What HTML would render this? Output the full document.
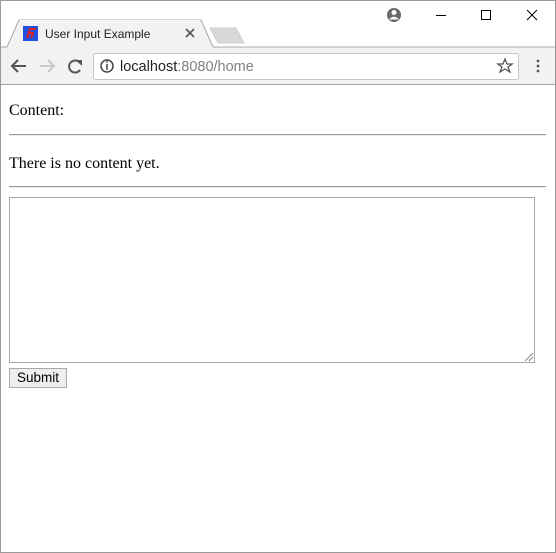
<!DOCTYPE html>
<html><head><style>
*{margin:0;padding:0;box-sizing:border-box}
body{width:556px;height:553px;overflow:hidden;background:#fff;position:relative;font-family:"Liberation Sans",sans-serif}
.abs{position:absolute}
.frame{left:0;top:0;width:556px;height:553px;border:1px solid #9a9a9a}
.serif{font-family:"Liberation Serif",serif;font-size:16px;color:#000}
</style></head><body>
<div class="abs frame"></div>
<svg class="abs" style="left:0;top:0" width="556" height="86">
<path d="M7 47 L19 20 L201 20 L213 47" fill="#f2f2f2" stroke="#a8a8a8" stroke-width="1"/>
<path d="M210 28 L236 28 L244 43 L218 43 Z" fill="#d8d8d8" stroke="#cfcfcf"/>
<rect x="1" y="47" width="554" height="38" fill="#f2f2f2"/>
<line x1="1" y1="47" x2="7" y2="47" stroke="#a8a8a8"/>
<line x1="213" y1="47" x2="555" y2="47" stroke="#a8a8a8"/>
<rect x="20" y="20" width="180" height="28" fill="#f2f2f2"/>
<line x1="1" y1="84.5" x2="555" y2="84.5" stroke="#a0a0a0"/>
<rect x="23" y="26" width="15" height="15" fill="#2050e0"/>
<path d="M27 38 L30 29 L36 29 M29 33 L34 33 M31 38 L33 33" stroke="#e02020" stroke-width="2" fill="none"/>
<path d="M186 29 L194 37 M194 29 L186 37" stroke="#555" stroke-width="1.6"/>
<circle cx="394" cy="15" r="7" fill="#6a6a6a"/><circle cx="394" cy="12.5" r="2.5" fill="#fff"/><path d="M389 19.5 Q394 14 399 19.5" fill="#fff"/>
<line x1="436" y1="15.5" x2="446" y2="15.5" stroke="#000"/>
<rect x="481.5" y="10.5" width="9" height="9" fill="none" stroke="#000"/>
<path d="M527 10 L537 20 M537 10 L527 20" stroke="#000"/>
<path d="M12 66 L26 66 M18 60 L12 66 L18 72" stroke="#555" stroke-width="2" fill="none"/>
<path d="M40 66 L54 66 M48 60 L54 66 L48 72" stroke="#c8c8c8" stroke-width="2" fill="none"/>
<path d="M80 63 A6 6 0 1 0 80 70" stroke="#555" stroke-width="2" fill="none"/><path d="M76 60 L82 60 L82 66 Z" fill="#555"/>
<rect x="93.5" y="53.5" width="425" height="26" rx="2" fill="#fff" stroke="#c6c6c6"/>
<circle cx="107" cy="66" r="6" fill="none" stroke="#444" stroke-width="1.5"/><line x1="107" y1="64" x2="107" y2="70" stroke="#444" stroke-width="1.5"/><circle cx="107" cy="62" r="0.9" fill="#444"/>
<path d="M505 59 L507 64 L512 64 L508 67 L510 72 L505 69 L500 72 L502 67 L498 64 L503 64 Z" fill="none" stroke="#555" stroke-width="1.3"/>
<circle cx="538" cy="61" r="1.4" fill="#555"/><circle cx="538" cy="66" r="1.4" fill="#555"/><circle cx="538" cy="71" r="1.4" fill="#555"/>
</svg>
<div class="abs" style="left:45px;top:27px;font-size:12px;color:#222">User Input Example</div>
<div class="abs" style="left:120px;top:59px;font-size:14.5px;color:#222">localhost<span style="color:#808080">:8080/home</span></div>
<div class="abs serif" style="left:9px;top:102px">Content:</div>
<div class="abs" style="left:9px;top:134px;width:537px;height:2px;border-top:1px solid #9a9a9a;border-bottom:1px solid #eee"></div>
<div class="abs serif" style="left:9px;top:155px">There is no content yet.</div>
<div class="abs" style="left:9px;top:186px;width:537px;height:2px;border-top:1px solid #9a9a9a;border-bottom:1px solid #eee"></div>
<div class="abs" style="left:9px;top:197px;width:526px;height:166px;border:1px solid #a9a9a9"></div>
<svg class="abs" style="left:524px;top:352px" width="10" height="10"><path d="M9 1 L1 9 M9 5 L5 9" stroke="#888"/></svg>
<div class="abs" style="left:9px;top:368px;width:58px;height:20px;border:1px solid #a9a9a9;background:#eee;font-size:13.5px;text-align:center;line-height:18px;color:#000">Submit</div>
</body></html>
